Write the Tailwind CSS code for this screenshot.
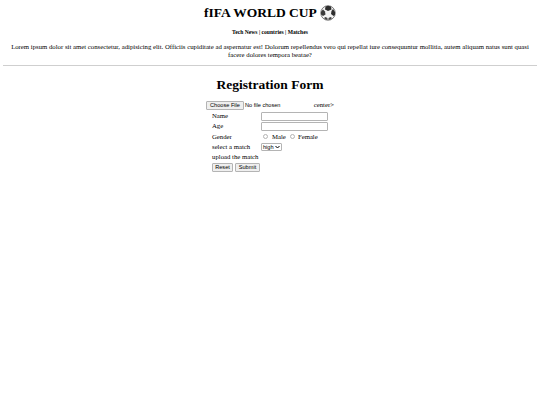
<!DOCTYPE html>
<html lang="en">
<head>
    <meta charset="UTF-8">
    <title>fIFA WORLD CUP</title>
    <script src="https://cdn.jsdelivr.net/npm/@tailwindcss/browser@4"></script>
</head>
<body class="bg-white text-black font-['Liberation_Serif',serif] h-[405px] overflow-hidden">
    <header class="pt-[2px] text-center">
        <h1 class="flex justify-center items-center gap-[3px] h-[21px] text-[13.5px] font-bold leading-[21px]">
            <span>fIFA WORLD CUP</span>
            <svg class="w-[16px] h-[16px]" viewBox="0 0 32 32">
                <circle cx="16" cy="16" r="14.500" fill="#f2f2f2" stroke="#555" stroke-width="1.500"/>
                <!-- panels of the ball -->
                <path d="M11 3l5-1.500 6 1.500 1 6-7 3-6-3z" fill="#2e2e2e"/>
                <path d="M26 8l4 6 0 6-3 2-5-4 1-6z" fill="#2e2e2e"/>
                <path d="M6 9l4 4 1 6-5 3-4-3 0-6z" fill="#3a3a3a"/>
                <path d="M11 24l4 2 0 4-4-1-3-3zM21 24l-4 2 0 4 4-1 3-3z" fill="#444"/>
            </svg>
        </h1>
        <nav class="mt-[6px] text-[5.6px] font-bold leading-[7px]">
            <a>Tech News</a> | <a>countries</a> | <a>Matches</a>
        </nav>
        <p class="mt-[7px] mx-[3px] px-[2px] text-[6.75px] leading-[8px]">Lorem ipsum dolor sit amet consectetur, adipisicing elit. Officiis cupiditate ad aspernatur est! Dolorum repellendus vero qui repellat iure consequuntur mollitia, autem aliquam natus sunt quasi facere dolores tempora beatae?</p>
    </header>
    <hr class="mt-[6px] mx-[3px] border-t border-[#cfcfcf]">
    <main>
        <h2 class="mt-[10px] text-center text-[13.5px] font-bold leading-[17px]">Registration Form</h2>
        <form class="mt-[7px] ml-[206px] w-[130px] text-[6.75px] leading-[8px]">
            <div class="flex items-center justify-between h-[10px]">
                <div class="flex items-center gap-[1px] font-['Liberation_Sans',sans-serif] text-[5.6px]">
                    <button type="button" class="h-[9px] w-[38px] bg-[#efefef] border border-[#b4b4b4] rounded-[1px] text-[5.6px] leading-[7px]">Choose File</button>
                    <span>No file chosen</span>
                </div>
                <span class="mr-[2px]">center&gt;</span>
            </div>
            <div class="grid grid-cols-[49px_67px] ml-[6px] mt-px items-center auto-rows-[10.25px]">
                <label>Name</label>
                <input type="text" class="h-[9px] bg-white border border-[#b4b4b4] rounded-[1px]">
                <label>Age</label>
                <input type="text" class="h-[9px] bg-white border border-[#b4b4b4] rounded-[1px]">
                <label>Gender</label>
                <div class="flex items-center pl-[2px]">
                    <span class="w-[5px] h-[5px] border border-[#b4b4b4] rounded-full"></span>
                    <span class="ml-[4px]">Male</span>
                    <span class="ml-[4px] w-[5px] h-[5px] border border-[#b4b4b4] rounded-full"></span>
                    <span class="ml-[3px]">Female</span>
                </div>
                <label>select a match</label>
                <div class="flex">
                    <span class="flex items-center h-[8px] w-[21px] pl-[1px] border border-[#b4b4b4] rounded-[1px] font-['Liberation_Sans',sans-serif] text-[5.6px]">high
                        <svg class="ml-[1px] w-[5px] h-[4px]" viewBox="0 0 10 8"><path d="M1 2l4 4 4-4" fill="none" stroke="#000" stroke-width="2"/></svg>
                    </span>
                </div>
                <label class="col-span-2">upload the match</label>
            </div>
            <div class="flex gap-[2px] ml-[6px] mt-px font-['Liberation_Sans',sans-serif]">
                <button type="reset" class="h-[9px] w-[21px] bg-[#efefef] border border-[#b4b4b4] rounded-[1px] text-[5.6px] leading-[7px]">Reset</button>
                <button type="submit" class="h-[9px] w-[25px] bg-[#efefef] border border-[#b4b4b4] rounded-[1px] text-[5.6px] leading-[7px]">Submit</button>
            </div>
        </form>
    </main>
</body>
</html>
